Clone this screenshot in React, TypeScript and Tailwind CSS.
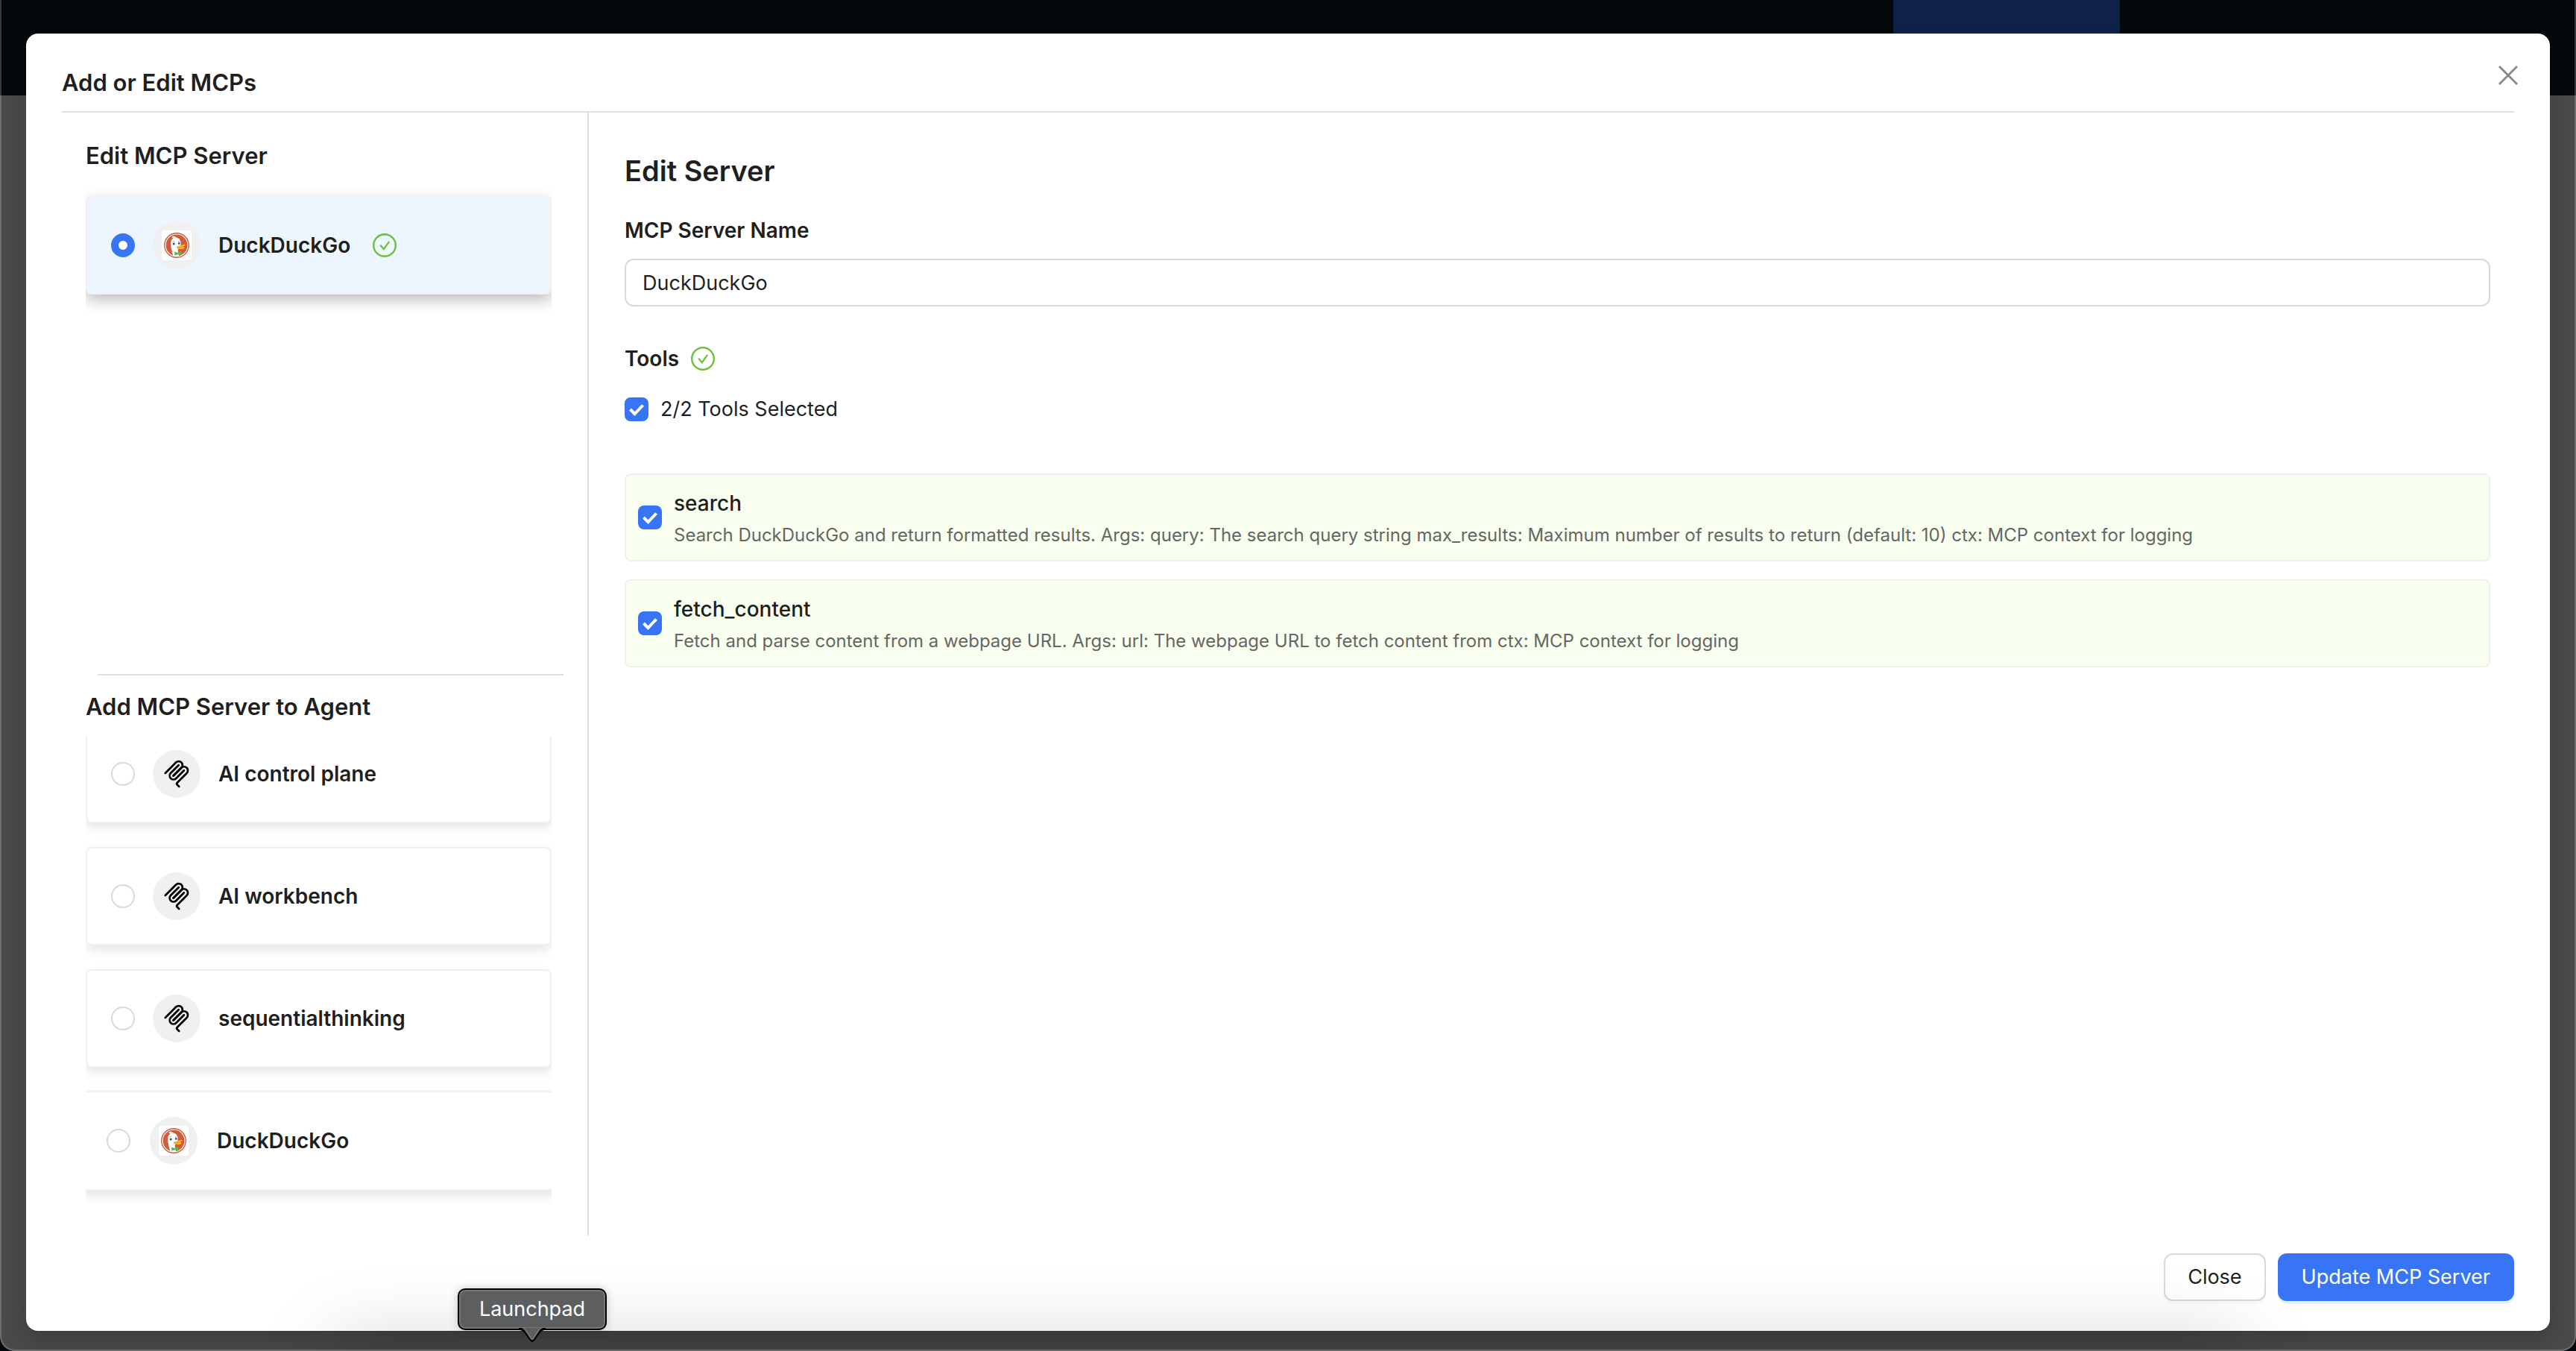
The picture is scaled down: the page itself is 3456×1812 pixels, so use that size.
import React, { useId } from "react";

function DuckLogo() {
  return (
    <svg viewBox="0 0 40 40" className="size-10" aria-hidden="true">
      <rect width="40" height="40" rx="4" fill="#fff" />
      <circle cx="20" cy="20" r="17" fill="#cf5c3a" />
      <circle cx="20" cy="20" r="15" fill="none" stroke="#fff" strokeWidth="1.2" />
      <path
        d="M13.5 8.500C15 7.300 18 7.800 19.500 9.600C22.800 10.200 25 12.600 25.400 15.600C25.700 18 25.500 19.500 25 21C24.300 23 22.200 24 21.800 26C21.500 28.500 22.600 31.500 23.400 34.500C20.500 35.300 17.500 35 15.200 34C13.800 28.600 12.200 23 12 18.600C11.800 15.200 12.800 12.200 15.400 10.800C14.800 10.200 13.800 9.400 13.500 8.500Z"
        fill="#fff"
      />
      <circle cx="16.200" cy="18" r="1.500" fill="#2b4b96" />
      <circle cx="23.200" cy="17.400" r="1.300" fill="#2b4b96" />
      <path d="M14.400 15.400c.8-.8 1.800-.9 2.600-.6M22 15c.7-.5 1.500-.5 2-.1" stroke="#6b8bc7" strokeWidth=".8" fill="none" />
      <path
        d="M20 22.200c1.200-1.700 4-1.700 6.200-2.200 2-.5 4-1.600 5-1 .9.800-1.200 2.300-3.400 3 .9.500 2.200.3 2.800.9.500 1.200-3.400 2.400-6 2-2.600-.3-5.200-1-4.600-2.700z"
        fill="#f8be1e"
      />
      <path d="M20.500 22.800c2.200.6 5 .2 7.300-.8" stroke="#d9881d" strokeWidth=".7" fill="none" />
      <path d="M17 28.600l4.400 1.300 4.800-1.700.2 5.200-4.800-1.200-4.400 1.400z" fill="#5fb85c" />
    </svg>
  );
}

function McpLogo() {
  return (
    <svg
      viewBox="0 0 180 180"
      className="size-[38px]"
      fill="none"
      stroke="#000"
      strokeWidth="13"
      strokeLinecap="round"
      aria-hidden="true"
    >
      <path d="M18 84.8528L85.8822 16.9706C95.2548 7.59798 110.451 7.59798 119.823 16.9706C129.196 26.3431 129.196 41.5391 119.823 50.9117L68.5581 102.177" />
      <path d="M69.2652 101.47L119.823 50.9117C129.196 41.5391 144.392 41.5391 153.765 50.9117L154.118 51.2652C163.491 60.6378 163.491 75.8338 154.118 85.2063L92.7248 146.6C89.6006 149.724 89.6006 154.789 92.7248 157.913L105.331 170.52" />
      <path d="M102.853 33.9411L52.6482 84.1457C43.2756 93.5183 43.2756 108.714 52.6482 118.087C62.0208 127.459 77.2167 127.459 86.5893 118.087L136.794 67.8822" />
    </svg>
  );
}

function StatusCheck() {
  return (
    <svg viewBox="0 0 32 32" className="size-8 shrink-0" fill="none" stroke="#6cc13a" role="img" aria-label="Connected">
      <circle cx="16" cy="16" r="14.800" strokeWidth="2.400" />
      <path d="M10.200 15.600L14.800 21.200L22.200 10.800" strokeWidth="2.200" />
    </svg>
  );
}

function Checkbox({ id }: { id: string }) {
  return (
    <span className="relative size-8 shrink-0">
      <input
        id={id}
        type="checkbox"
        defaultChecked
        className="peer block size-8 appearance-none rounded-lg border-2 border-[#d9d9d9] bg-white checked:border-[#3875f6] checked:bg-[#3875f6]"
      />
      <svg
        viewBox="0 0 32 32"
        className="pointer-events-none absolute inset-0 hidden size-8 peer-checked:block"
        fill="none"
        stroke="#fff"
        strokeWidth="4"
        aria-hidden="true"
      >
        <path d="M7.500 16L13.500 22.200L24.500 10.500" />
      </svg>
    </span>
  );
}

type Server = {
  name: string;
  logo: "duck" | "mcp";
  selected?: boolean;
  hovered?: boolean;
};

function ServerCard({ server }: { server: Server }) {
  const tone = server.selected
    ? "gap-6 py-8 bg-[#edf6fe] shadow-[0_8px_20px_rgba(0,0,0,0.26)]"
    : server.hovered
      ? "-mx-1.5 -my-px gap-[26px] py-[33px] bg-white shadow-[0_6px_16px_rgba(0,0,0,0.12)]"
      : "gap-6 py-8 bg-white shadow-[0_6px_14px_rgba(0,0,0,0.1)]";
  return (
    <label className={`flex items-center rounded-lg border-2 border-[#f0f0f0] px-8 ${tone}`}>
      <input
        type="radio"
        name="server"
        defaultChecked={server.selected}
        className="size-8 shrink-0 appearance-none rounded-full border-2 border-[#d9d9d9] bg-white checked:border-[10px] checked:border-[#3875f6]"
      />
      <span className="flex size-16 shrink-0 items-center justify-center rounded-full bg-[#f0f0f0]">
        {server.logo === "duck" ? <DuckLogo /> : <McpLogo />}
      </span>
      <span className="mr-1.5 text-[28px] leading-[44px] font-semibold whitespace-nowrap">{server.name}</span>
      {server.selected && <StatusCheck />}
    </label>
  );
}

const available: Server[] = [
  { name: "AI control plane", logo: "mcp" },
  { name: "AI workbench", logo: "mcp" },
  { name: "sequentialthinking", logo: "mcp" },
  { name: "DuckDuckGo", logo: "duck", hovered: true },
];

const tools = [
  {
    name: "search",
    description:
      "Search DuckDuckGo and return formatted results. Args: query: The search query string max_results: Maximum number of results to return (default: 10) ctx: MCP context for logging",
  },
  {
    name: "fetch_content",
    description:
      "Fetch and parse content from a webpage URL. Args: url: The webpage URL to fetch content from ctx: MCP context for logging",
  },
];

function ToolRow({ name, description }: { name: string; description: string }) {
  const id = useId();
  return (
    <li className="flex items-center gap-4 rounded-lg border-2 border-[#f0f0f0] bg-[#f8ffee] p-4">
      <Checkbox id={id} />
      <label htmlFor={id} className="min-w-0">
        <span className="block text-[28px] leading-[44px] font-medium">{name}</span>
        <span className="mt-1 block text-[24px] leading-[34px] text-[#666666]">{description}</span>
      </label>
    </li>
  );
}

function Sidebar() {
  return (
    <aside className="flex w-[707px] shrink-0 flex-col border-r-2 border-[#e0e0e0] pr-12 pl-8">
      <section className="flex min-h-0 flex-1 basis-0 flex-col">
        <h2 className="mt-[34px] text-[31px] leading-[48px] font-semibold">Edit MCP Server</h2>
        <div className="min-h-0 flex-1 overflow-hidden pt-[30px]">
          <ServerCard server={{ name: "DuckDuckGo", logo: "duck", selected: true }} />
        </div>
      </section>
      <section className="flex min-h-0 flex-1 basis-0 flex-col">
        <hr className="-mr-4 ml-4 border-t-2 border-[#e0e0e0]" />
        <h2 className="mt-[18px] text-[31px] leading-[48px] font-semibold">Add MCP Server to Agent</h2>
        <div className="mt-4 min-h-0 flex-1 overflow-hidden">
          <div className="-mt-4 flex flex-col gap-8">
            {available.map((server) => (
              <ServerCard key={server.name} server={server} />
            ))}
          </div>
        </div>
      </section>
    </aside>
  );
}

function ServerForm() {
  return (
    <main className="min-w-0 flex-1 pt-[50px] pr-8 pl-12">
      <h2 className="text-[38px] leading-[56px] font-semibold">Edit Server</h2>
      <label htmlFor="server-name" className="mt-[30px] block text-[28px] leading-[44px] font-semibold">
        MCP Server Name
      </label>
      <input
        id="server-name"
        type="text"
        defaultValue="DuckDuckGo"
        className="mt-4 block h-16 w-full rounded-xl border-2 border-[#d9d9d9] bg-white px-[22px] text-[27px]"
      />
      <div className="mt-12 flex items-center gap-4">
        <h3 className="text-[28px] leading-[44px] font-semibold">Tools</h3>
        <StatusCheck />
      </div>
      <div className="mt-6 flex items-center gap-4">
        <Checkbox id="all-tools" />
        <label htmlFor="all-tools" className="text-[27px] leading-[44px]">
          2/2 Tools Selected
        </label>
      </div>
      <ul className="mt-16 flex flex-col gap-6">
        {tools.map((tool) => (
          <ToolRow key={tool.name} name={tool.name} description={tool.description} />
        ))}
      </ul>
    </main>
  );
}

function LaunchpadTooltip() {
  return (
    <div role="tooltip" className="absolute bottom-7 left-[614px]">
      <div className="flex h-14 w-[200px] items-center justify-center rounded-[10px] border-2 border-black bg-[#5d5e60] text-[27px] text-white shadow-[0_0_12px_rgba(0,0,0,0.2),inset_0_0_0_2px_#77787a]">
        Launchpad
      </div>
      <svg viewBox="0 0 36 20" className="absolute top-[53px] left-[82px] h-5 w-9" aria-hidden="true">
        <path d="M0 0H36V3C31 3 30 5 27 9L21 17Q18 21 15 17L9 9C6 5 5 3 0 3Z" fill="#000" />
        <path d="M2 0H34C30 0 28.500 2.500 26 6L20 15Q18 17.500 16 15L10 6C7.500 2.500 6 0 2 0Z" fill="#77787a" />
        <path d="M7 0H29C27 1.500 26 3 24.500 5L18 14.500L11.500 5C10 3 9 1.500 7 0Z" fill="#5d5e60" />
      </svg>
    </div>
  );
}

export default function App() {
  return (
    <div
      className="relative h-screen overflow-hidden bg-[#04080b] text-[#1f1f1f]"
      style={{ fontFamily: 'Inter, "Liberation Sans", sans-serif' }}
    >
      <div className="flex h-full flex-col overflow-hidden rounded-b-[20px] bg-[#4a4a4a]">
        <header className="flex h-32 shrink-0 justify-end bg-[#04080b] pr-[612px]">
          <div className="h-full w-[304px] bg-[#0f2249]" />
        </header>
      </div>

      <div className="absolute inset-0 flex px-[35px] pt-[45px] pb-[27px]">
        <div
          role="dialog"
          aria-labelledby="dialog-title"
          className="flex min-w-0 flex-1 flex-col rounded-2xl bg-white px-12 pb-10 shadow-[0_12px_32px_rgba(0,0,0,0.2)]"
        >
          <div className="flex items-start justify-between border-b-2 border-[#e0e0e0] pt-10">
            <h1 id="dialog-title" className="pt-0.5 pb-3.5 text-[31px] leading-[48px] font-semibold">
              Add or Edit MCPs
            </h1>
            <button type="button" aria-label="Close dialog" className="-mr-2 flex size-8 items-center justify-center">
              <svg viewBox="0 0 26 26" className="size-[26px]" stroke="#888888" strokeWidth="2.800" aria-hidden="true">
                <path d="M1 1L25 25M25 1L1 25" />
              </svg>
            </button>
          </div>
          <div className="flex min-h-0 flex-1">
            <Sidebar />
            <ServerForm />
          </div>
          <div className="mt-6 flex justify-end gap-4">
            <button
              type="button"
              className="h-16 rounded-xl border-2 border-[#d9d9d9] bg-white px-[30px] text-[27px] shadow-[0_4px_0_rgba(0,0,0,0.02)]"
            >
              Close
            </button>
            <button
              type="button"
              className="h-16 rounded-xl bg-[#3875f6] px-8 text-[27px] text-white shadow-[0_4px_0_#e9f2fe]"
            >
              Update MCP Server
            </button>
          </div>
        </div>
      </div>

      <div className="pointer-events-none absolute inset-x-[460px] -bottom-20 h-16 shadow-[0_-10px_110px_10px_rgba(0,0,0,0.22)]" />
      <div className="pointer-events-none absolute inset-0 rounded-b-[20px] border-x-2 border-b-2 border-white/20" />
      <LaunchpadTooltip />
    </div>
  );
}
